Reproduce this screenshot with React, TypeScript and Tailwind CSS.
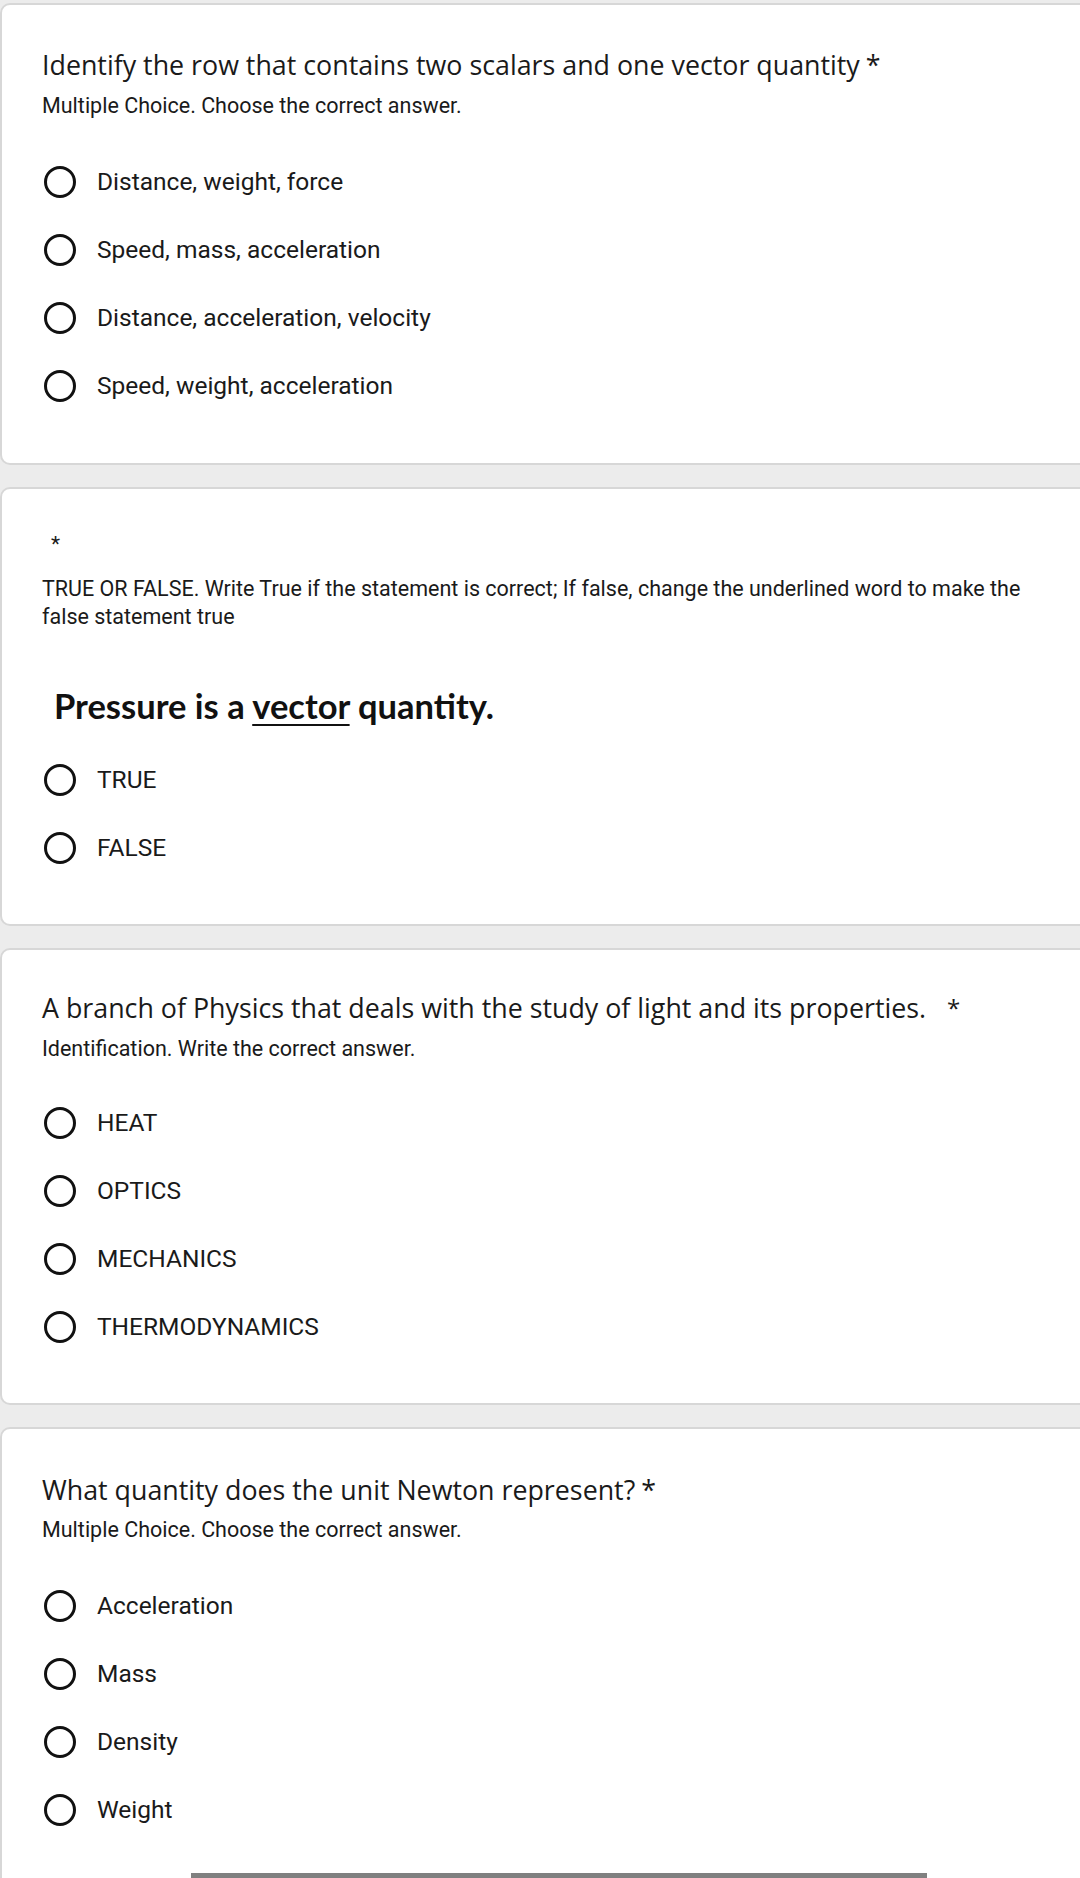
import React from 'react';

type Question = {
  title?: string;
  star?: 'inline' | 'spaced';
  subtitle: string;
  options: string[];
};

const Radio: React.FC<{ label: string }> = ({ label }) => (
  <div className="h-[68px] flex items-center">
    <div className="w-[32px] h-[32px] rounded-full border-[3px] border-[#111] ml-[2px] shrink-0" />
    <span className="ml-[21px] text-[24.5px] text-[#1a1a1a] leading-none">{label}</span>
  </div>
);

const Card: React.FC<{ children: React.ReactNode; className?: string }> = ({ children, className = '' }) => (
  <div className={`w-[1100px] bg-white border-2 border-[#d7d7d7] rounded-[10px] pl-[40px] ${className}`}>
    {children}
  </div>
);

const q1: Question = {
  title: 'Identify the row that contains two scalars and one vector quantity',
  star: 'inline',
  subtitle: 'Multiple Choice. Choose the correct answer.',
  options: ['Distance, weight, force', 'Speed, mass, acceleration', 'Distance, acceleration, velocity', 'Speed, weight, acceleration'],
};

const q3: Question = {
  title: 'A branch of Physics that deals with the study of light and its properties.',
  star: 'spaced',
  subtitle: 'Identification. Write the correct answer.',
  options: ['HEAT', 'OPTICS', 'MECHANICS', 'THERMODYNAMICS'],
};

const q4: Question = {
  title: 'What quantity does the unit Newton represent?',
  star: 'inline',
  subtitle: 'Multiple Choice. Choose the correct answer.',
  options: ['Acceleration', 'Mass', 'Density', 'Weight'],
};

const Header: React.FC<{ q: Question }> = ({ q }) => (
  <div
    className="h-[32px] flex items-center text-[26.8px] text-[#1a1a1a] whitespace-nowrap"
    style={{ fontFamily: '"Open Sans", Roboto, sans-serif' }}
  >
    <span>{q.title}</span>
    {q.star === 'inline' ? <span className="ml-[6px]">*</span> : <span className="ml-[21px] text-[24px]">*</span>}
  </div>
);

export default function App() {
  return (
    <div className="w-[1080px] h-[1878px] overflow-hidden bg-[#ececec] pt-[3px] flex flex-col gap-[22px]" style={{ fontFamily: 'Roboto, "Liberation Sans", sans-serif' }}>
      <Card className="pt-[44px] pb-[43px]">
        <Header q={q1} />
        <p className="mt-[13px] h-[24px] leading-[24px] text-[21.5px] text-[#1a1a1a]">{q1.subtitle}</p>
        <div className="mt-[30px]">
          {q1.options.map((o) => <Radio key={o} label={o} />)}
        </div>
      </Card>

      <Card className="pt-[43px] pb-[42px]">
        <p className="h-[24px] leading-[24px] text-[21px] text-[#1a1a1a] pl-[9px]">*</p>
        <p className="mt-[19px] leading-[28px] text-[21.5px] text-[#1a1a1a] w-[1010px]">
          TRUE OR FALSE. Write True if the statement is correct; If false, change the underlined word to make the false statement true
        </p>
        <p className="mt-[55px] h-[40px] leading-[40px] pl-[12px] text-[34.5px] font-bold text-[#111]" style={{ fontFamily: 'Lato, "Open Sans", sans-serif' }}>
          Pressure is a <span className="underline decoration-[2px] underline-offset-[5px]">vector</span> quantity.
        </p>
        <div className="mt-[20px]">
          <Radio label="TRUE" />
          <Radio label="FALSE" />
        </div>
      </Card>

      <Card className="pt-[42px] pb-[42px]">
        <Header q={q3} />
        <p className="mt-[13px] h-[24px] leading-[24px] text-[21.5px] text-[#1a1a1a]">{q3.subtitle}</p>
        <div className="mt-[28px]">
          {q3.options.map((o) => <Radio key={o} label={o} />)}
        </div>
      </Card>

      <Card className="pt-[45px] pb-[40px]">
        <Header q={q4} />
        <p className="mt-[12px] h-[24px] leading-[24px] text-[21.5px] text-[#1a1a1a]">{q4.subtitle}</p>
        <div className="mt-[30px]">
          {q4.options.map((o) => <Radio key={o} label={o} />)}
        </div>
        <div className="mt-[29px] ml-[149px] w-[736px] h-[8px] bg-[#808080]" />
      </Card>
    </div>
  );
}
